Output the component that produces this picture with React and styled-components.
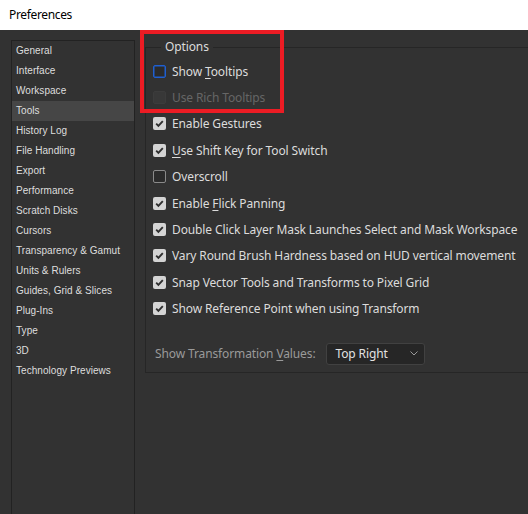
import React from 'react';
import styled, { createGlobalStyle } from 'styled-components';

const GlobalStyle = createGlobalStyle`
    html, body {
        margin: 0;
        padding: 0;
        background: #323232;
    }
    * {
        box-sizing: border-box;
    }
`;

const NAV_ITEMS = [
    'General',
    'Interface',
    'Workspace',
    'Tools',
    'History Log',
    'File Handling',
    'Export',
    'Performance',
    'Scratch Disks',
    'Cursors',
    'Transparency & Gamut',
    'Units & Rulers',
    'Guides, Grid & Slices',
    'Plug-Ins',
    'Type',
    '3D',
    'Technology Previews',
];

// label pieces: [before, underlined letter, after]
const OPTIONS = [
    { label: ['Show ', 'T', 'ooltips'], state: 'focus' },
    { label: ['Use Rich Tooltips', '', ''], state: 'disabled' },
    { label: ['Enable Gestures', '', ''], state: 'checked' },
    { label: ['', 'U', 'se Shift Key for Tool Switch'], state: 'checked' },
    { label: ['Overscroll', '', ''], state: 'off' },
    { label: ['Enable ', 'F', 'lick Panning'], state: 'checked' },
    { label: ['Double Click Layer Mask Launches Select and Mask Workspace', '', ''], state: 'checked' },
    { label: ['Vary Round Brush Hardness based on HUD vertical movement', '', ''], state: 'checked' },
    { label: ['Snap Vector Tools and Transforms to Pixel Grid', '', ''], state: 'checked' },
    { label: ['Show Reference Point when using Transform', '', ''], state: 'checked' },
];

const App = () => {
    return (
        <>
            <GlobalStyle />
            <Window>
                <TitleBar>Preferences</TitleBar>
                <Body>
                    <Sidebar>
                        {NAV_ITEMS.map((item) => (
                            <NavItem key={item} $active={item === 'Tools'}>{item}</NavItem>
                        ))}
                    </Sidebar>
                    <Main>
                        <Group>
                            <Legend>Options</Legend>
                            {OPTIONS.map((opt) => (
                                <OptionRow key={opt.label.join('')} $disabled={opt.state === 'disabled'}>
                                    <Check $state={opt.state}>
                                        {opt.state === 'checked' && (
                                            <svg width="13" height="13" viewBox="0 0 13 13">
                                                <path d="M3.2 6.6 L5.4 8.8 L9.8 4.2" fill="none" stroke="#2e2e2e" strokeWidth="1.9" />
                                            </svg>
                                        )}
                                    </Check>
                                    <span>
                                        {opt.label[0]}
                                        {opt.label[1] && <u>{opt.label[1]}</u>}
                                        {opt.label[2]}
                                    </span>
                                </OptionRow>
                            ))}
                            <SelectRow>
                                <SelectLabel>Show Transformation <u>V</u>alues:</SelectLabel>
                                <Select>
                                    Top Right
                                    <svg width="8" height="5" viewBox="0 0 8 5">
                                        <path d="M0.5 0.5 L4 4 L7.5 0.5" fill="none" stroke="#9a9a9a" strokeWidth="1" />
                                    </svg>
                                </Select>
                            </SelectRow>
                        </Group>
                    </Main>
                </Body>
                <Highlight />
            </Window>
        </>
    );
};

const Window = styled.div`
    position: relative;
    width: 528px;
    height: 514px;
    overflow: hidden;
    display: flex;
    flex-direction: column;
    background: #323232;
`;

const TitleBar = styled.div`
    height: 30px;
    flex: none;
    background: #ffffff;
    color: #000;
    font-family: "Noto Sans", "Liberation Sans", sans-serif;
    font-size: 12px;
    letter-spacing: -0.35px;
    line-height: 30px;
    padding-left: 9px;
`;

const Body = styled.div`
    flex: 1;
    display: flex;
    align-items: flex-start;
    padding: 9px 0 0 11px;
    min-height: 0;
`;

const Sidebar = styled.div`
    flex: none;
    width: 124px;
    height: 500px;
    margin-top: 1px;
    border: 1px solid #222222;
    border-bottom: none;
    display: flex;
    flex-direction: column;
`;

const NavItem = styled.div`
    height: 20px;
    line-height: 20px;
    padding-left: 4px;
    font-family: "Liberation Sans", Arial, sans-serif;
    font-size: 10px;
    letter-spacing: 0.05px;
    color: #dedede;
    background: ${(p) => (p.$active ? '#464646' : 'transparent')};
    white-space: nowrap;
`;

const Main = styled.div`
    flex: none;
    margin-left: 10px;
`;

const Group = styled.fieldset`
    margin: 0;
    width: 420px;
    border: 1px solid #262626;
    padding: 3px 0 7px 7px;
    font-family: "Noto Sans", "Liberation Sans", sans-serif;
    font-size: 12px;
    letter-spacing: -0.12px;
`;

const Legend = styled.legend`
    margin-left: 8px;
    padding: 0 4px;
    color: #dcdcdc;
    font-size: 12px;
    line-height: 16px;
`;

const OptionRow = styled.div`
    height: 26.4px;
    display: flex;
    align-items: center;
    gap: 6px;
    color: ${(p) => (p.$disabled ? '#666666' : '#dcdcdc')};
    white-space: nowrap;
    u {
        text-underline-offset: 2px;
    }
`;

const Check = styled.span`
    flex: none;
    width: 13px;
    height: 13px;
    border-radius: 2px;
    display: flex;
    ${(p) => p.$state === 'checked' && `
        background: #d4d4d4;
        border: none;
    `}
    ${(p) => p.$state === 'off' && `
        background: #2b2b2b;
        border: 1px solid #8a8a8a;
    `}
    ${(p) => p.$state === 'focus' && `
        background: #2b2b2b;
        border: 1px solid #1f5fd0;
        box-shadow: inset 0 0 0 0.5px #1f5fd0;
    `}
    ${(p) => p.$state === 'disabled' && `
        background: #383838;
        border: 1px solid #3c3c3c;
    `}
`;

const SelectRow = styled.div`
    display: flex;
    align-items: center;
    gap: 10px;
    margin-top: 21px;
    padding-left: 2px;
`;

const SelectLabel = styled.span`
    color: #9a9a9a;
    white-space: nowrap;
    u {
        text-underline-offset: 2px;
    }
`;

const Select = styled.div`
    width: 99px;
    height: 22px;
    border: 1px solid #414141;
    border-radius: 3px;
    background: #262626;
    color: #e2e2e2;
    display: flex;
    align-items: center;
    justify-content: space-between;
    padding: 0 6px 0 9px;
`;

const Highlight = styled.div`
    position: absolute;
    left: 140px;
    top: 30px;
    width: 144px;
    height: 83px;
    border: 4px solid #ec1c24;
    pointer-events: none;
`;

export default App;
